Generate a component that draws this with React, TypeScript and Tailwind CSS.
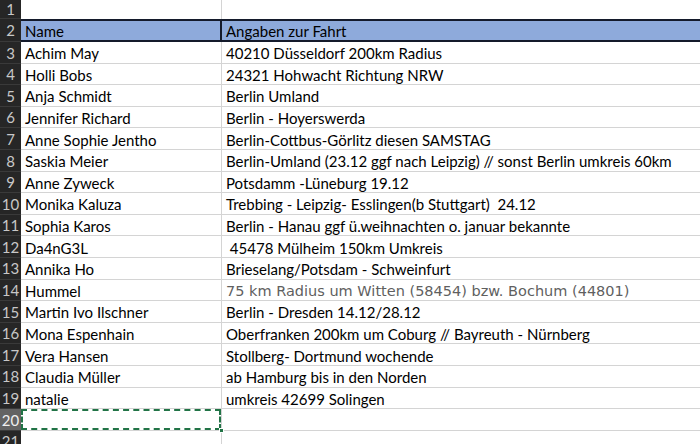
import React from "react";

const rows: [string, string][] = [
  ["Achim May", "40210 Düsseldorf 200km Radius"],
  ["Holli Bobs", "24321 Hohwacht Richtung NRW"],
  ["Anja Schmidt", "Berlin Umland"],
  ["Jennifer Richard", "Berlin - Hoyerswerda"],
  ["Anne Sophie Jentho", "Berlin-Cottbus-Görlitz diesen SAMSTAG"],
  ["Saskia Meier", "Berlin-Umland (23.12 ggf nach Leipzig) // sonst Berlin umkreis 60km"],
  ["Anne Zyweck", "Potsdamm -Lüneburg 19.12"],
  ["Monika Kaluza", "Trebbing - Leipzig- Esslingen(b Stuttgart)  24.12"],
  ["Sophia Karos", "Berlin - Hanau ggf ü.weihnachten o. januar bekannte"],
  ["Da4nG3L", " 45478 Mülheim 150km Umkreis"],
  ["Annika Ho", "Brieselang/Potsdam - Schweinfurt"],
  ["Hummel", "75 km Radius um Witten (58454) bzw. Bochum (44801)"],
  ["Martin Ivo Ilschner", "Berlin - Dresden 14.12/28.12"],
  ["Mona Espenhain", "Oberfranken 200km um Coburg // Bayreuth - Nürnberg"],
  ["Vera Hansen", "Stollberg- Dortmund wochende"],
  ["Claudia Müller", "ab Hamburg bis in den Norden"],
  ["natalie", "umkreis 42699 Solingen"],
];

const font = { fontFamily: "Lato, 'Open Sans', sans-serif" };

function Header({ n, active }: { n: number; active?: boolean }) {
  return (
    <div
      className={`w-[21px] shrink-0 flex items-center justify-center pt-[1px] text-[15px] border-b border-[#3a3a3a] ${
        active ? "bg-[#636363] text-[#f0f0f0]" : "bg-[#262626] text-[#c8c8c8]"
      }`}
    >
      {n}
    </div>
  );
}

export default function App() {
  return (
    <div className="w-[700px] h-[444px] overflow-hidden bg-white text-black text-[15px]" style={font}>
      {/* row 1 */}
      <div className="flex h-[19px]">
        <Header n={1} />
        <div className="w-[201px] shrink-0 border-r border-[#d4d4d4]" />
        <div className="flex-1" />
      </div>
      {/* row 2 header */}
      <div className="flex h-[23px]">
        <Header n={2} />
        <div className="flex-1 flex bg-[#8eaadb] border-y-2 border-[#141a2b]">
          <div className="w-[201px] shrink-0 border-r-2 border-[#141a2b] pl-[4px] pt-[1px] flex items-center leading-none">
            Name
          </div>
          <div className="flex-1 pl-[4px] pt-[1px] flex items-center leading-none">Angaben zur Fahrt</div>
        </div>
      </div>
      {rows.map(([a, b], i) => {
        const special = i === 11;
        return (
          <div key={i} className="flex h-[21.6px]">
            <Header n={i + 3} />
            <div className="w-[201px] shrink-0 border-r border-b border-[#d4d4d4] pl-[4px] pt-[3px] flex items-center whitespace-pre leading-none">
              {a}
            </div>
            <div
              className={`flex-1 border-b border-[#d4d4d4] pl-[4px] pt-[3px] flex items-center whitespace-pre leading-none ${
                special ? "text-[#5f5f5f] text-[14.5px]" : ""
              }`}
              style={special ? { fontFamily: "'DejaVu Sans', Verdana, sans-serif" } : undefined}
            >
              {b}
            </div>
          </div>
        );
      })}
      {/* row 20 selected */}
      <div className="flex h-[21.6px]">
        <Header n={20} active />
        <div className="relative w-[201px] shrink-0 border-r border-b border-[#d4d4d4]">
          <div className="absolute inset-0 border-2 border-dashed border-[#217346]" />
          <div className="absolute right-[-3px] bottom-[-3px] w-[5px] h-[5px] bg-[#217346] border border-white" />
        </div>
        <div className="flex-1 border-b border-[#d4d4d4]" />
      </div>
      {/* row 21 */}
      <div className="flex h-[21.6px]">
        <Header n={21} />
        <div className="w-[201px] shrink-0 border-r border-b border-[#d4d4d4]" />
        <div className="flex-1 border-b border-[#d4d4d4]" />
      </div>
    </div>
  );
}
